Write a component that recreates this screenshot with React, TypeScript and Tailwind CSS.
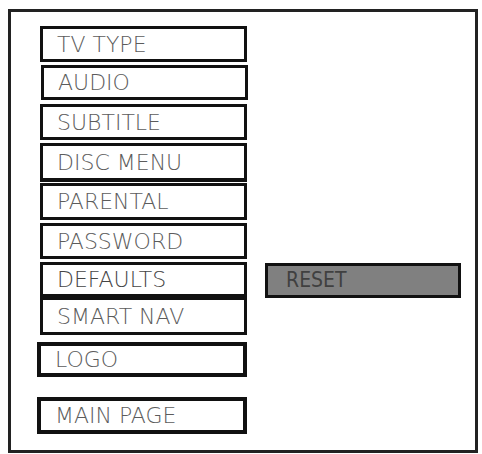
type Item = {
    label: string;
    cls: string;
};

// each row carries its own offset, height and width — the source is a hand-drawn diagram
const items: Item[] = [
    { label: 'TV TYPE', cls: 'mt-[14px] ml-[29px] h-[36px] w-[207px]' },
    { label: 'AUDIO', cls: 'mt-[3px] ml-[30px] h-[35px] w-[207px]' },
    { label: 'SUBTITLE', cls: 'mt-[4px] ml-[29px] h-[36px] w-[207px]' },
    { label: 'DISC MENU', cls: 'mt-[3px] ml-[29px] h-[39px] w-[207px] border-b-[4px]' },
    { label: 'PARENTAL', cls: 'mt-[1px] ml-[29px] h-[37px] w-[207px]' },
    { label: 'PASSWORD', cls: 'mt-[3px] ml-[29px] h-[36px] w-[207px]' },
    { label: 'DEFAULTS', cls: 'mt-[3px] ml-[29px] h-[38px] w-[207px] border-b-[6px] bg-[#808080] text-[#454545]' },
    { label: 'SMART NAV', cls: 'ml-[29px] h-[35px] w-[207px] border-t-0' },
    { label: 'LOGO', cls: 'mt-[7px] ml-[26px] h-[35px] w-[210px] border-[4px]' },
    { label: 'MAIN PAGE', cls: 'mt-[20px] ml-[26px] h-[37px] w-[210px] border-[4px]' },
];

export default function App() {
    return (
        <div className="w-[482px] h-[454px] bg-white overflow-hidden pt-[9px] pl-[8px]" style={{ fontFamily: '"DejaVu Sans", "Liberation Sans", sans-serif' }}>
            <div className="w-[470px] h-[444px] border-[3px] border-[#222] flex">
                <div className="flex flex-col">
                    {items.map(item => (
                        <div
                            key={item.label}
                            className={`flex items-center border-[3px] border-[#111] pl-[14px] pt-[1px] text-[22px] font-extralight text-[#5c5c5c] leading-none bg-white ${item.cls}`}
                        >
                            {item.label}
                        </div>
                    ))}
                </div>
                <div className="pt-[251px] pl-[17px]">
                    <div
                        className="flex items-center h-[35px] w-[196px] border-[3px] border-[#111] bg-[#808080] pl-[18px] text-[21px] text-[#404040] leading-none"
                        style={{ fontFamily: '"Liberation Sans Narrow", "DejaVu Sans Condensed", sans-serif' }}
                    >
                        RESET
                    </div>
                </div>
            </div>
        </div>
    );
}
